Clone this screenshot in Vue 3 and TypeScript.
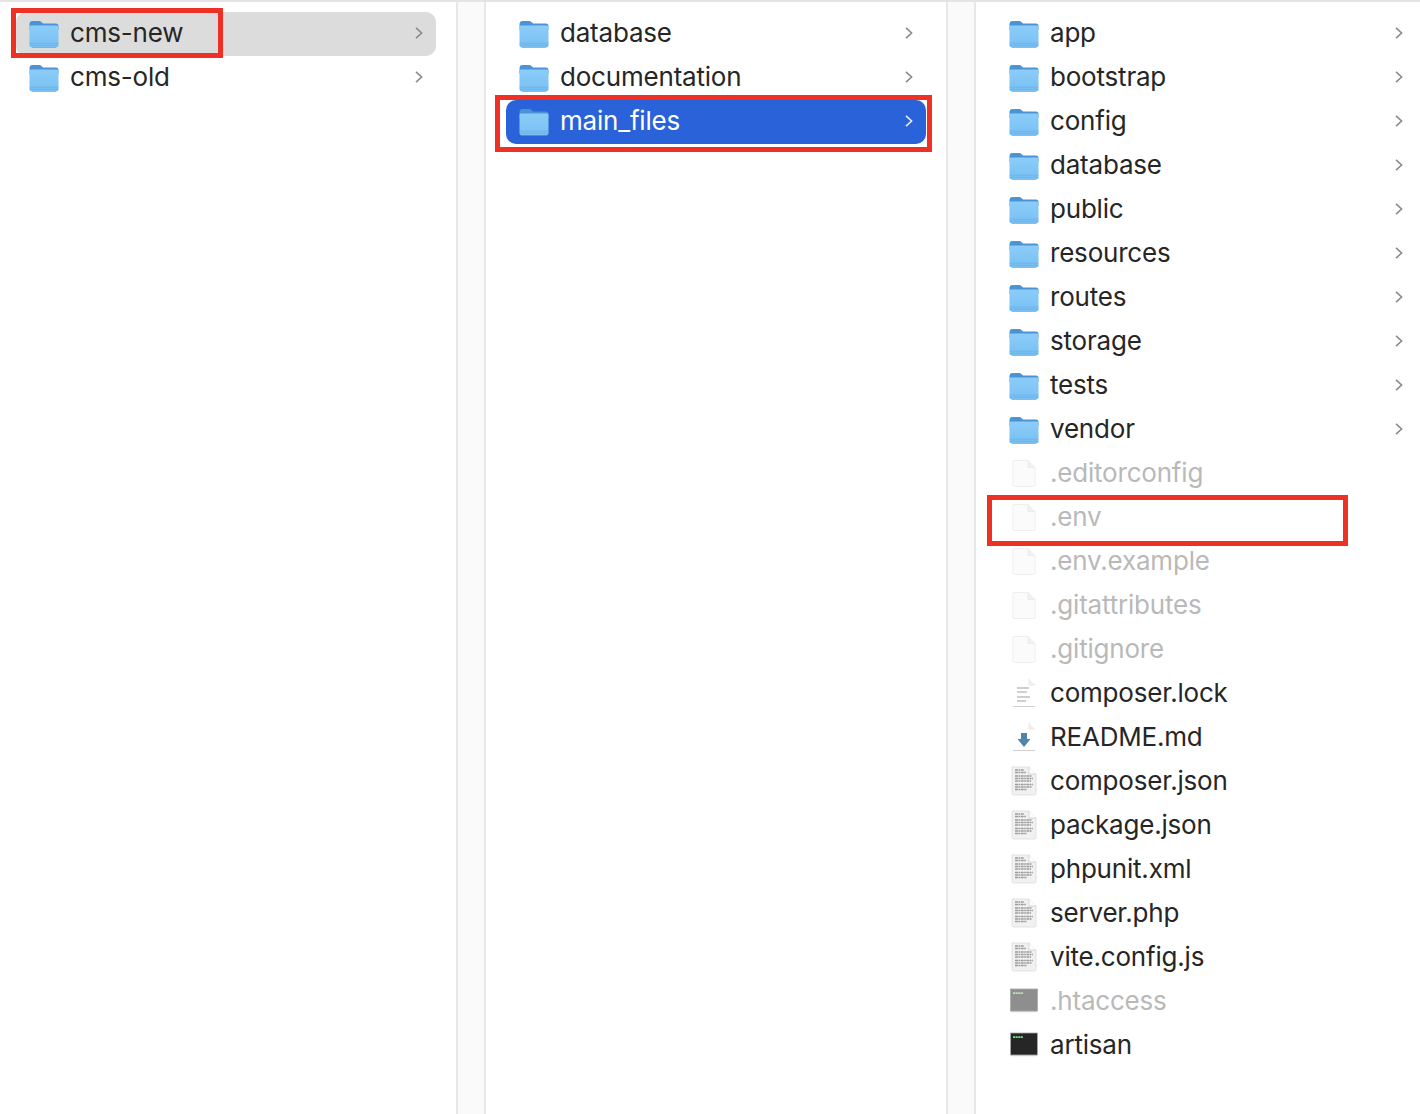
<script setup lang="ts">
type Kind = 'folder' | 'blank' | 'lines' | 'markdown' | 'doc' | 'exec'

interface Entry {
  name: string
  kind: Kind
  hidden?: boolean
  selected?: boolean
}

const folder = (name: string, selected = false): Entry => ({ name, kind: 'folder', selected })
const dot = (name: string): Entry => ({ name, kind: 'blank', hidden: true })
const doc = (name: string): Entry => ({ name, kind: 'doc' })

const columns: { cls: string; entries: Entry[] }[] = [
  { cls: 'col-one', entries: [folder('cms-new', true), folder('cms-old')] },
  { cls: 'col-two', entries: [folder('database'), folder('documentation'), folder('main_files', true)] },
  {
    cls: 'col-three',
    entries: [
      folder('app'),
      folder('bootstrap'),
      folder('config'),
      folder('database'),
      folder('public'),
      folder('resources'),
      folder('routes'),
      folder('storage'),
      folder('tests'),
      folder('vendor'),
      dot('.editorconfig'),
      dot('.env'),
      dot('.env.example'),
      dot('.gitattributes'),
      dot('.gitignore'),
      { name: 'composer.lock', kind: 'lines' },
      { name: 'README.md', kind: 'markdown' },
      doc('composer.json'),
      doc('package.json'),
      doc('phpunit.xml'),
      doc('server.php'),
      doc('vite.config.js'),
      { name: '.htaccess', kind: 'exec', hidden: true },
      { name: 'artisan', kind: 'exec' }
    ]
  }
]

// rows of tiny text on the document icon
const docLines = [
  { y: 4, end: 15 },
  { y: 6.5, end: 17 },
  { y: 10, end: 23 },
  { y: 12.5, end: 24 },
  { y: 15, end: 22 },
  { y: 18.5, end: 24 },
  { y: 21, end: 23 },
  { y: 23.5, end: 18 }
]
</script>

<template>
  <div class="finder">
    <svg class="defs" width="0" height="0">
      <defs>
        <linearGradient id="folderBody" x1="0" y1="0" x2="0" y2="1">
          <stop offset="0" stop-color="#8ccdf9" />
          <stop offset="1" stop-color="#78bff3" />
        </linearGradient>
      </defs>
    </svg>

    <template v-for="(col, c) in columns" :key="col.cls">
      <section class="column" :class="col.cls">
        <div
          v-for="entry in col.entries"
          :key="entry.name"
          class="row"
          :class="{ selected: entry.selected, hidden: entry.hidden, active: entry.selected && c === 1 }"
        >
          <svg class="icon" viewBox="0 0 30 30" width="30" height="30">
            <template v-if="entry.kind === 'folder'">
              <path d="M0.5 6.5C0.5 4 1.5 3 3.5 3H10C11.5 3 12 3.6 13 4.6L14 5.6H27C28.6 5.6 29.5 6.5 29.5 8V12H0.5Z" fill="#4a93d6" />
              <path d="M0.5 9.3C0.5 8.1 1.3 7.5 2.5 7.5H27.5C28.7 7.5 29.5 8.1 29.5 9.3V27C29.5 28.6 28.6 29.5 27 29.5H3C1.4 29.5 0.5 28.6 0.5 27Z" fill="url(#folderBody)" />
              <path d="M0.5 25.3H29.5M0.5 27.3H29.5" stroke="#5ea6de" stroke-width="0.7" opacity="0.6" />
              <path d="M3 29.8H27" stroke="#4f7fa8" stroke-width="0.8" opacity="0.7" />
            </template>
            <template v-else-if="entry.kind === 'blank'">
              <path d="M4 2.5H19L26 9.5V27C26 28 25.4 28.5 24.5 28.5H5.5C4.6 28.5 4 28 4 27Z" fill="#fbfbfb" stroke="#efefef" />
              <path d="M19 2.5V9.5H26" fill="#f1f1f1" stroke="#e8e8e8" stroke-width="0.8" />
            </template>
            <template v-else-if="entry.kind === 'lines'">
              <path d="M5 1H20L26 7V28H5Z" fill="#fff" />
              <path d="M20 1V7H26" fill="#f0f0f0" stroke="#e2e2e2" stroke-width="0.7" />
              <path d="M8 10H20M8 14H18M8 19H21M8 23H17" stroke="#a0a0a0" stroke-width="1.1" />
              <path d="M4 28.5H26" stroke="#cfcfcf" />
            </template>
            <template v-else-if="entry.kind === 'markdown'">
              <path d="M5 1H20L26 7V28H5Z" fill="#fff" />
              <path d="M20 1V7H26" fill="#f0f0f0" stroke="#e2e2e2" stroke-width="0.7" />
              <path d="M12 11H18V17H21.5L15 25L8.5 17H12Z" fill="#4d85ad" />
              <path d="M4 28.5H26" stroke="#cfcfcf" />
            </template>
            <template v-else-if="entry.kind === 'doc'">
              <path d="M3 1H20L27 8V27.5C27 28.4 26.4 29 25.5 29H4.5C3.6 29 3 28.4 3 27.5Z" fill="#f1f1f1" stroke="#dcdcdc" stroke-width="0.8" />
              <path d="M20 1V8H27" fill="#fff" stroke="#c8c8c8" stroke-width="0.7" />
              <path
                v-for="line in docLines"
                :key="line.y"
                :d="`M6 ${line.y}H${line.end}`"
                stroke="#9c9c9c"
                stroke-width="1.4"
                stroke-dasharray="3 0.5 1.6 0.6"
              />
            </template>
            <template v-else>
              <rect x="1.5" y="3" width="27" height="22" :fill="entry.hidden ? '#8e8e8e' : '#262626'" stroke="#a9a9a9" stroke-width="0.8" />
              <path d="M4 7.2H14" :stroke="entry.hidden ? '#bfe0b8' : '#76e070'" stroke-width="1.8" stroke-dasharray="2.1 0.5" />
              <path d="M2 25.7H28" stroke="#c4c4c4" />
            </template>
          </svg>
          <span class="name">{{ entry.name }}</span>
          <svg v-if="entry.kind === 'folder'" class="chevron" viewBox="0 0 8 12" width="8" height="12">
            <path d="M1 0.8L6.6 6L1 11.2" fill="none" stroke="currentColor" stroke-width="1.6" />
          </svg>
        </div>
      </section>
      <div v-if="c < 2" class="gutter"></div>
    </template>

    <div class="mark mark-one"></div>
    <div class="mark mark-two"></div>
    <div class="mark mark-three"></div>
  </div>
</template>

<style scoped>
.finder {
  position: relative;
  display: flex;
  width: 1420px;
  height: 1114px;
  box-sizing: border-box;
  border-top: 2px solid #e4e4e4;
  background: #fff;
  overflow: hidden;
  font-family: Inter, "Liberation Sans", sans-serif;
}

.defs {
  position: absolute;
}

.column {
  box-sizing: border-box;
  padding-top: 10px;
  flex: none;
}

.col-one {
  width: 456px;
  padding-left: 16px;
  padding-right: 20px;
}

.col-two {
  width: 460px;
  padding-left: 20px;
  padding-right: 20px;
}

.col-three {
  width: 444px;
  padding-left: 20px;
  padding-right: 4px;
}

.gutter {
  flex: none;
  width: 26px;
  background: #fafafa;
  border-left: 2px solid #e8e8e8;
  border-right: 2px solid #e8e8e8;
}

.row {
  display: flex;
  align-items: center;
  height: 44px;
  padding: 0 13px;
  border-radius: 10px;
  color: #262626;
  font-size: 26px;
  letter-spacing: -0.2px;
}

.row.selected {
  background: #dcdcdc;
}

.row.active {
  background: #2a62d9;
  color: #fff;
}

.row.hidden {
  color: #b9b9b9;
}

.icon {
  flex: none;
  margin-top: -3px;
}

.name {
  margin-left: 11px;
  line-height: 1;
  margin-top: -2px;
}

.chevron {
  flex: none;
  margin-left: auto;
  margin-top: -2px;
  color: #8a8a8a;
}

.row.active .chevron {
  color: #e8eefc;
}

.mark {
  position: absolute;
  box-sizing: border-box;
  border: 5px solid #ee3124;
}

.mark-one {
  left: 11px;
  top: 6px;
  width: 212px;
  height: 50px;
}

.mark-two {
  left: 495px;
  top: 93px;
  width: 437px;
  height: 57px;
}

.mark-three {
  left: 987px;
  top: 493px;
  width: 361px;
  height: 51px;
}
</style>

<style>
html,
body {
  margin: 0;
  background: #fff;
}
</style>
